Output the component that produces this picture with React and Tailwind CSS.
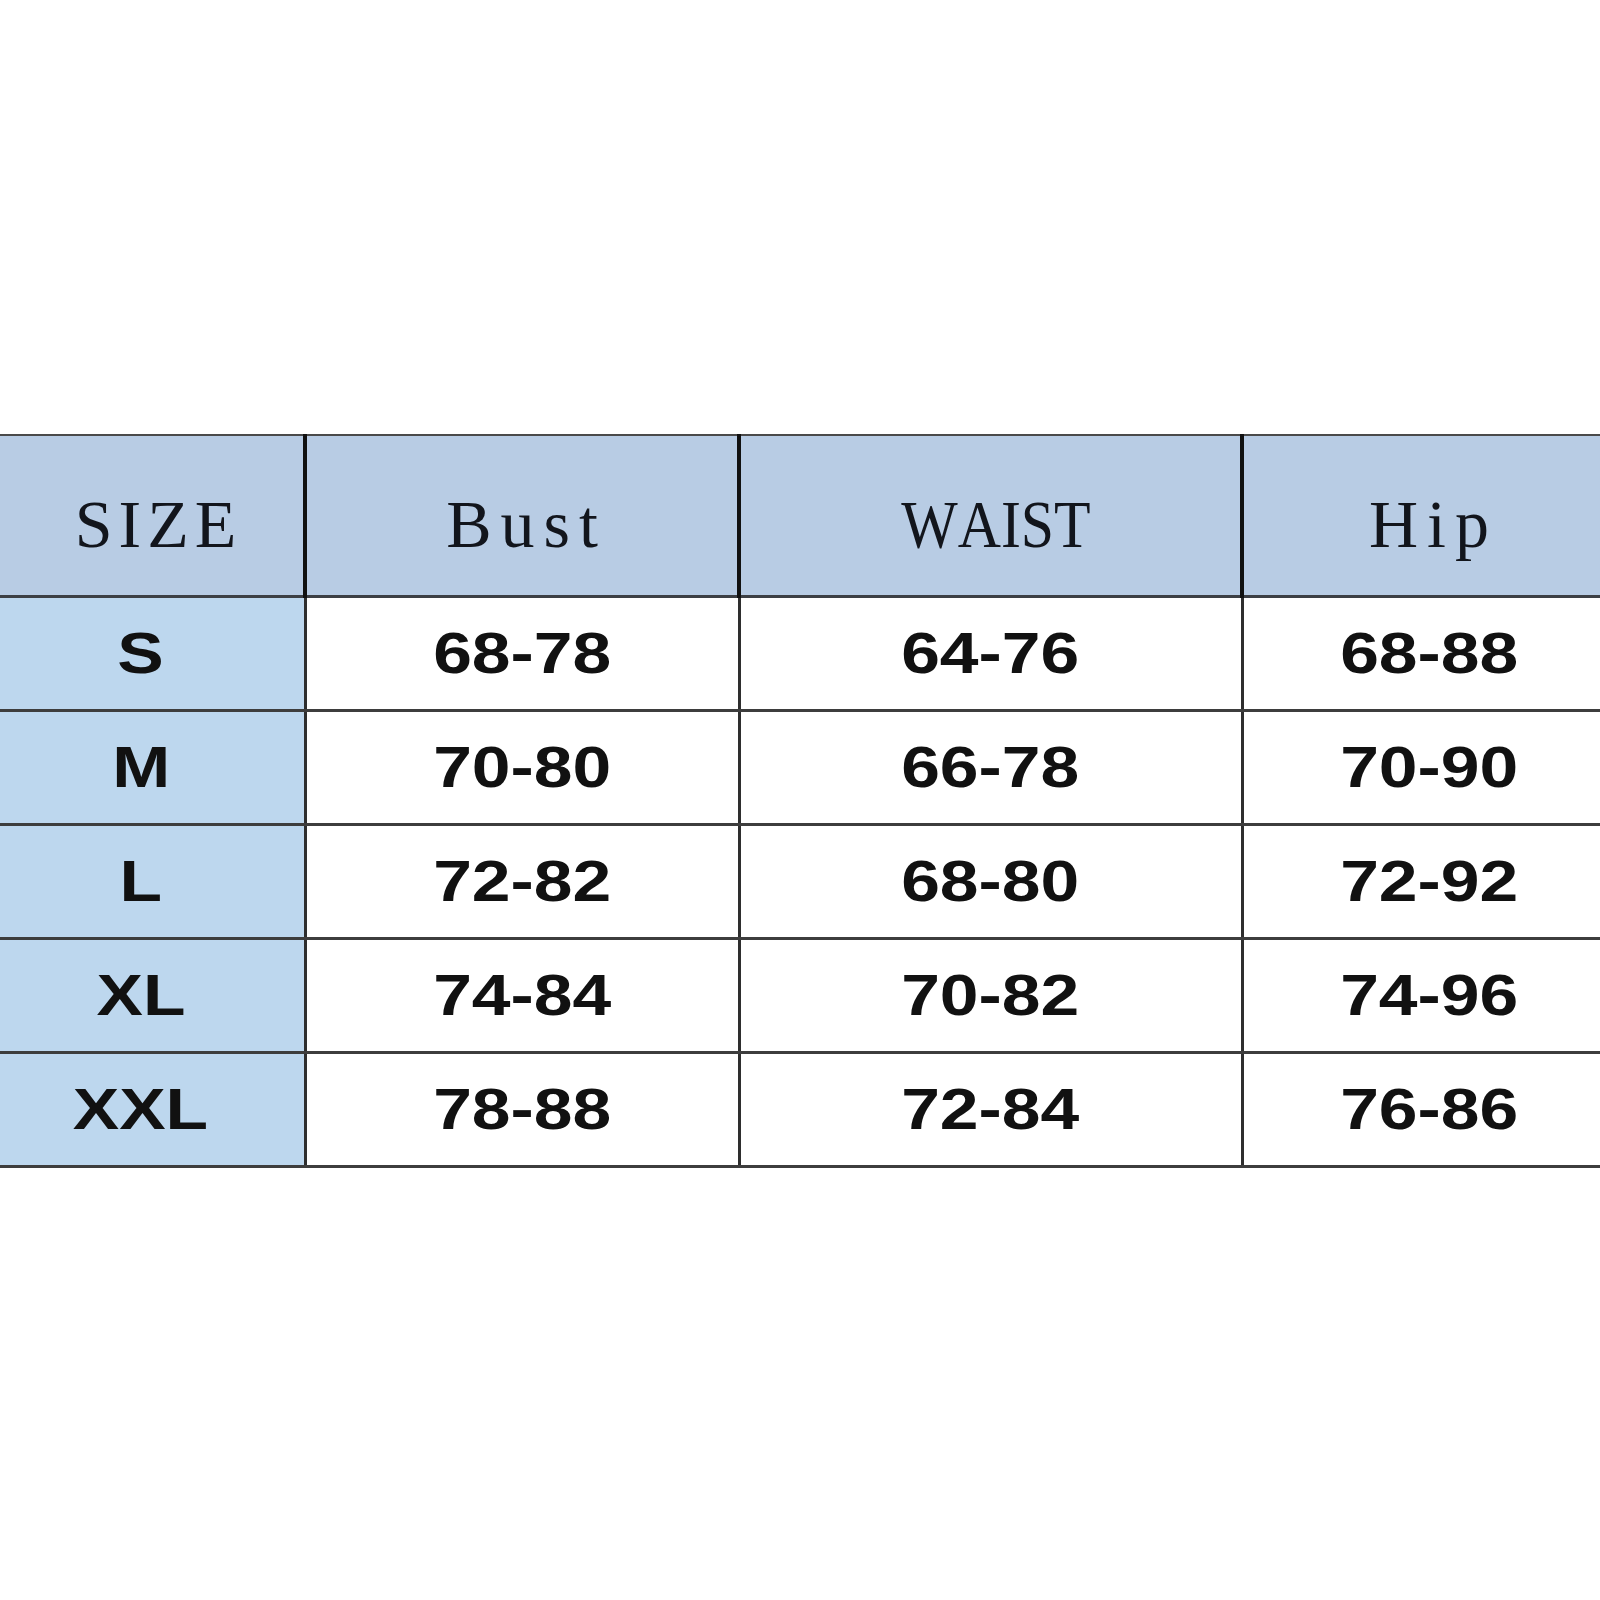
const HEADERS = [
  { label: 'SIZE', cls: 'tracking-[6px] pl-[36px]' },
  { label: 'Bust', cls: 'tracking-[9px] pl-[9px]' },
  { label: 'WAIST', cls: 'scale-x-[0.88] pl-[12px] [font-kerning:none]' },
  { label: 'Hip', cls: 'tracking-[9px] pl-[9px]' },
]

const ROWS = [
  ['S', '68-78', '64-76', '68-88'],
  ['M', '70-80', '66-78', '70-90'],
  ['L', '72-82', '68-80', '72-92'],
  ['XL', '74-84', '70-82', '74-96'],
  ['XXL', '78-88', '72-84', '76-86'],
]

const WIDTHS = ['w-[327px]', 'w-[434px]', 'w-[503px]', 'w-[372px]']

export default function App() {
  return (
    <div className="w-[1600px] h-[1600px] overflow-hidden bg-white pt-[434px]">
      <table className="table-fixed border-collapse ml-[-22px] w-[1636px]">
        <thead>
          <tr className="h-[161px] bg-[#b8cce4]">
            {HEADERS.map((h, i) => (
              <th
                key={h.label}
                className={`${WIDTHS[i]} p-0 border-t-2 border-b-[3px] border-t-[#4a4a4a] border-b-[#3c3f44] ${i < 3 ? 'border-r-[4px] border-r-[#111]' : ''} font-normal text-center align-middle`}
              >
                <span
                  className={`inline-block pt-[18px] text-[68px] leading-none text-[#12151c] ${h.cls}`}
                  style={{ fontFamily: '"Liberation Serif", "DejaVu Serif", serif' }}
                >
                  {h.label}
                </span>
              </th>
            ))}
          </tr>
        </thead>
        <tbody>
          {ROWS.map(row => (
            <tr key={row[0]} className="h-[114px]">
              {row.map((cell, i) => (
                <td
                  key={i}
                  className={`p-0 text-center align-middle border-b-[3px] border-b-[#3d3d3d] ${i < 3 ? 'border-r-[3px] border-r-[#2e2e2e]' : ''} ${i === 0 ? 'bg-[#bdd7ee]' : 'bg-white'}`}
                >
                  <span
                    className="inline-block scale-x-[1.2] text-[58px] font-bold leading-none text-[#111]"
                    style={{ fontFamily: '"Liberation Sans", Arial, sans-serif' }}
                  >
                    {cell}
                  </span>
                </td>
              ))}
            </tr>
          ))}
        </tbody>
      </table>
    </div>
  )
}
